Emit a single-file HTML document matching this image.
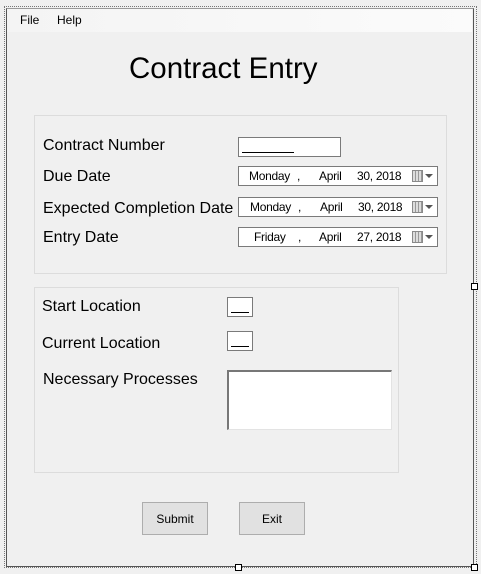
<!DOCTYPE html>
<html><head><style>
body{margin:0;width:481px;height:574px;background:#f0f0f0;position:relative;overflow:hidden;font-family:"Liberation Sans",Arial,sans-serif;color:#000}
.a{position:absolute}
.lbl{position:absolute;font-size:16px;white-space:nowrap}
.dp{position:absolute;left:238px;width:198px;height:18px;border:1px solid #7a7a7a;background:#fff;font-size:12px}
.dp span{position:absolute;top:2px;letter-spacing:-0.3px}
.cal{position:absolute;left:173px;top:3px;width:9px;height:10px;border:1px solid #8a8a8a;background:repeating-linear-gradient(90deg,#ddd 0 2px,#999 2px 3px)}
.arr{position:absolute;left:186px;top:7px;width:0;height:0;border-left:4px solid transparent;border-right:4px solid transparent;border-top:4px solid #555}
.btn{position:absolute;width:64px;height:31px;border:1px solid #adadad;background:#e1e1e1;font-size:12px;text-align:center;line-height:33px}
.h{position:absolute;width:5px;height:5px;border:1px solid #000;background:#fff}
</style></head><body>
<div class="a" style="left:4px;top:6px;width:471px;height:560px;border:1px dotted #777"></div>
<div class="a" style="left:6px;top:8px;width:466px;height:557px;border:1px solid #555;border-top-color:#999"></div>
<div class="a" style="left:7px;top:9px;width:465px;height:23px;background:linear-gradient(90deg,#f4f4f4,#fbfbfb)"></div>
<div class="a" style="left:20px;top:13px;font-size:12px">File</div>
<div class="a" style="left:57px;top:13px;font-size:12px">Help</div>
<div class="a" style="left:129px;top:52px;font-size:29.5px">Contract Entry</div>

<div class="a" style="left:34px;top:115px;width:411px;height:157px;border:1px solid #dcdcdc"></div>
<div class="lbl" style="left:43px;top:137px">Contract Number</div>
<div class="lbl" style="left:43px;top:168px">Due Date</div>
<div class="lbl" style="left:43px;top:200px">Expected Completion Date</div>
<div class="lbl" style="left:43px;top:229px">Entry Date</div>
<div class="a" style="left:238px;top:137px;width:101px;height:18px;border:1px solid #7a7a7a;background:#fff"><div class="a" style="left:3px;top:14px;width:52px;height:1px;background:#000"></div></div>
<div class="dp" style="top:166px"><span style="left:10px">Monday</span><span style="left:58px">,</span><span style="left:80px">April</span><span style="left:118px">30, 2018</span><div class="cal"></div><div class="arr"></div></div>
<div class="dp" style="top:197px"><span style="left:11px">Monday</span><span style="left:59px">,</span><span style="left:81px">April</span><span style="left:119px">30, 2018</span><div class="cal"></div><div class="arr"></div></div>
<div class="dp" style="top:227px"><span style="left:15px">Friday</span><span style="left:59px">,</span><span style="left:80px">April</span><span style="left:118px">27, 2018</span><div class="cal"></div><div class="arr"></div></div>

<div class="a" style="left:34px;top:287px;width:363px;height:184px;border:1px solid #dcdcdc"></div>
<div class="lbl" style="left:42px;top:298px">Start Location</div>
<div class="lbl" style="left:42px;top:335px">Current Location</div>
<div class="lbl" style="left:43px;top:371px">Necessary Processes</div>
<div class="a" style="left:227px;top:297px;width:24px;height:18px;border:1px solid #7a7a7a;background:#fff"><div class="a" style="left:3px;top:14px;width:18px;height:1px;background:#000"></div></div>
<div class="a" style="left:227px;top:331px;width:24px;height:18px;border:1px solid #7a7a7a;background:#fff"><div class="a" style="left:3px;top:14px;width:18px;height:1px;background:#000"></div></div>
<div class="a" style="left:227px;top:370px;width:162px;height:57px;border:1px solid #e3e3e3;border-top:2px solid #777;border-left:2px solid #777;background:#fff"></div>

<div class="btn" style="left:142px;top:502px">Submit</div>
<div class="btn" style="left:239px;top:502px">Exit</div>
<div class="h" style="left:235px;top:564px"></div>
<div class="h" style="left:471px;top:564px"></div>
<div class="h" style="left:471px;top:283px"></div>
</body></html>
